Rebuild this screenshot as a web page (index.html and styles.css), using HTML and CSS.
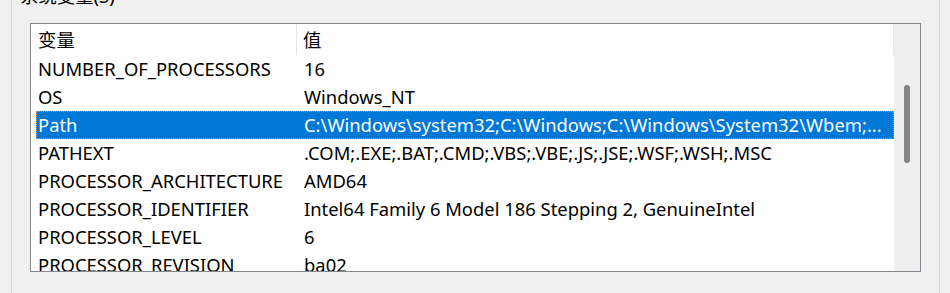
FILE: index.html
```html
<!DOCTYPE html>
<html lang="zh-CN">
<head>
    <meta charset="UTF-8">
    <title>系统变量</title>
    <link rel="stylesheet" href="styles.css">
</head>
<body>

    <div class="group">
        <div class="group-title">系统变量(S)</div>

        <div class="listbox">
            <div class="list">
                <div class="row header">
                    <div class="cell name">变量</div>
                    <div class="cell value">值</div>
                </div>
                <div class="row">
                    <div class="cell name">NUMBER_OF_PROCESSORS</div>
                    <div class="cell value">16</div>
                </div>
                <div class="row">
                    <div class="cell name">OS</div>
                    <div class="cell value">Windows_NT</div>
                </div>
                <div class="row selected">
                    <div class="cell name">Path</div>
                    <div class="cell value">C:\Windows\system32;C:\Windows;C:\Windows\System32\Wbem;...</div>
                </div>
                <div class="row">
                    <div class="cell name">PATHEXT</div>
                    <div class="cell value">.COM;.EXE;.BAT;.CMD;.VBS;.VBE;.JS;.JSE;.WSF;.WSH;.MSC</div>
                </div>
                <div class="row">
                    <div class="cell name">PROCESSOR_ARCHITECTURE</div>
                    <div class="cell value">AMD64</div>
                </div>
                <div class="row">
                    <div class="cell name">PROCESSOR_IDENTIFIER</div>
                    <div class="cell value">Intel64 Family 6 Model 186 Stepping 2, GenuineIntel</div>
                </div>
                <div class="row">
                    <div class="cell name">PROCESSOR_LEVEL</div>
                    <div class="cell value">6</div>
                </div>
                <div class="row">
                    <div class="cell name">PROCESSOR_REVISION</div>
                    <div class="cell value">ba02</div>
                </div>
            </div>

            <!-- Scrollleiste -->
            <div class="scrollbar">
                <div class="thumb"></div>
            </div>
        </div>
    </div>

</body>
</html>
```

FILE: styles.css
```css
body {
    background-color: #f0f0f0;
    color: #000000;
    font-family: "Noto Sans", "Noto Sans CJK SC", sans-serif;
    font-size: 18.4px;
    margin: 0;
    padding: 0;
    height: 293px;
    overflow: hidden;
}

.group {
    margin-left: 11px;
    width: 891px;
    height: 320px;
    border-left: 1px solid #d9d9d9;
    border-right: 1px solid #d9d9d9;
    padding: 0 18px;
}

.group-title {
    margin-top: -14px;
    margin-left: -10px;
    height: 20px;
    line-height: 20px;
    white-space: nowrap;
}

.listbox {
    margin-top: 17px;
    height: 247px;
    border: 1px solid #828790;
    background-color: #ffffff;
    display: flex;
    overflow: hidden;
}

.list {
    flex-grow: 1;
    padding-left: 5px;
    overflow: hidden;
}

.row {
    display: grid;
    grid-template-columns: 261px 1fr;
    height: 28px;
    align-items: center;
    white-space: nowrap;
}

.cell {
    overflow: hidden;
    line-height: 28px;
}

.name {
    padding-left: 2px;
}

.value {
    padding-left: 7px;
}

.header {
    height: 31px;
    margin-left: -5px;
    padding-left: 5px;
}

.header .cell {
    line-height: 31px;
    height: 31px;
}

.header .name {
    border-right: 1px solid #e5e5e5;
}

.header .value {
    padding-left: 6px;
    border-right: 1px solid #e5e5e5;
}

.selected {
    background-color: #0078d7;
    color: #ffffff;
    outline: 1px dotted #f0902a;
    outline-offset: -1px;
}

.scrollbar {
    width: 26px;
    flex-shrink: 0;
    background-color: #efefef;
    position: relative;
}

.thumb {
    position: absolute;
    left: 10px;
    top: 61px;
    width: 6px;
    height: 78px;
    border-radius: 3px;
    background-color: #858585;
}
```
